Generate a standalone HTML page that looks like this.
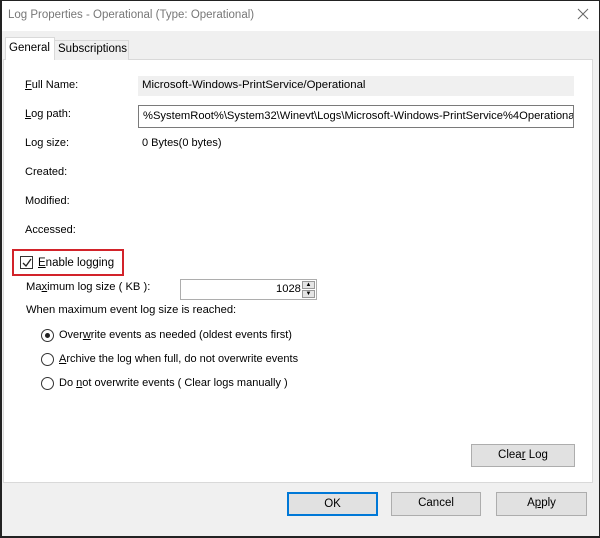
<!DOCTYPE html>
<html><head><style>
*{margin:0;padding:0;box-sizing:border-box}
body{width:600px;height:538px;overflow:hidden;background:#f0f0f0;font-family:"Liberation Sans",sans-serif;font-size:11px;color:#000;position:relative}
.a{position:absolute;white-space:nowrap}
.win{position:absolute;left:0;top:0;width:600px;height:538px;border:1px solid #222;border-bottom-width:2px;border-left-width:2px}
.title{position:absolute;left:0;top:0;width:600px;height:31px;background:#fff}
.pane{position:absolute;left:3px;top:59px;width:590px;height:424px;background:#fff;border:1px solid #d9d9d9}
.btn{position:absolute;background:#e1e1e1;border:1px solid #adadad;text-align:center;line-height:21px;font-size:11.5px}
u{text-decoration:underline}
.radio{position:absolute;width:13px;height:13px;border:1px solid #333;border-radius:50%;background:#fff}
</style></head><body>
<div class="title"></div>
<div class="a" style="left:8px;top:9px;color:#777;font-size:11.5px">Log Properties - Operational (Type: Operational)</div>
<svg class="a" style="left:577px;top:8px" width="12" height="12"><path d="M1 1 L11 11 M11 1 L1 11" stroke="#666" stroke-width="1"/></svg>
<div class="pane"></div>
<div class="a" style="left:54px;top:40px;width:75px;height:20px;background:#f0f0f0;border:1px solid #d9d9d9;border-bottom:none"></div>
<div class="a" style="left:5px;top:37px;width:50px;height:23px;background:#fff;border:1px solid #d9d9d9;border-bottom:none"></div>
<div class="a" style="left:9px;top:42px;font-size:11.5px">General</div>
<div class="a" style="left:58px;top:43px;font-size:11.5px">Subscriptions</div>

<div class="a" style="left:25px;top:79px"><u>F</u>ull Name:</div>
<div class="a" style="left:138px;top:76px;width:436px;height:20px;background:#f0f0f0"></div>
<div class="a" style="left:142px;top:79px;font-size:11.4px">Microsoft-Windows-PrintService/Operational</div>
<div class="a" style="left:25px;top:108px"><u>L</u>og path:</div>
<div class="a" style="left:138px;top:105px;width:436px;height:23px;border:1px solid #7a7a7a;background:#fff;overflow:hidden;padding:4px 0 0 4px;font-size:11.2px">%SystemRoot%\System32\Winevt\Logs\Microsoft-Windows-PrintService%4Operational</div>
<div class="a" style="left:25px;top:137px">Log size:</div>
<div class="a" style="left:142px;top:137px">0 Bytes(0 bytes)</div>
<div class="a" style="left:25px;top:166px">Created:</div>
<div class="a" style="left:25px;top:195px">Modified:</div>
<div class="a" style="left:25px;top:224px">Accessed:</div>

<div class="a" style="left:12px;top:249px;width:112px;height:27px;border:2px solid #d2232a"></div>
<div class="a" style="left:20px;top:256px;width:13px;height:13px;border:1px solid #333;background:#fff"></div>
<svg class="a" style="left:21px;top:257px" width="12" height="12"><path d="M2 6 L5 9 L10 2" stroke="#222" stroke-width="1.3" fill="none"/></svg>
<div class="a" style="left:38px;top:257px;font-size:11.5px"><u>E</u>nable logging</div>
<div class="a" style="left:26px;top:281px;font-size:11.2px">Ma<u>x</u>imum log size ( KB ):</div>
<div class="a" style="left:180px;top:279px;width:137px;height:21px;border:1px solid #adadad;background:#fff"></div>
<div class="a" style="left:276px;top:283px;font-size:11.2px">1028</div>
<div class="a" style="left:302px;top:281px;width:13px;height:8px;background:#e5e5e5;border:1px solid #999;font-size:6px;line-height:6px;text-align:center">▲</div>
<div class="a" style="left:302px;top:290px;width:13px;height:8px;background:#e5e5e5;border:1px solid #999;font-size:6px;line-height:6px;text-align:center">▼</div>
<div class="a" style="left:26px;top:304px;font-size:11.2px">When maximum event log size is reached:</div>
<div class="radio" style="left:41px;top:329px"></div><div class="a" style="left:45px;top:333px;width:5px;height:5px;border-radius:50%;background:#222"></div>
<div class="a" style="left:59px;top:329px;font-size:11px">Over<u>w</u>rite events as needed (oldest events first)</div>
<div class="radio" style="left:41px;top:353px"></div>
<div class="a" style="left:59px;top:353px;font-size:11px"><u>A</u>rchive the log when full, do not overwrite events</div>
<div class="radio" style="left:41px;top:377px"></div>
<div class="a" style="left:59px;top:377px;font-size:11px">Do <u>n</u>ot overwrite events ( Clear logs manually )</div>

<div class="btn" style="left:471px;top:444px;width:104px;height:23px">Clea<u>r</u> Log</div>
<div class="btn" style="left:287px;top:492px;width:91px;height:24px;border:2px solid #0078d7;line-height:20px">OK</div>
<div class="btn" style="left:391px;top:492px;width:90px;height:24px">Cancel</div>
<div class="btn" style="left:496px;top:492px;width:91px;height:24px">A<u>p</u>ply</div>
<div class="win"></div>
</body></html>
